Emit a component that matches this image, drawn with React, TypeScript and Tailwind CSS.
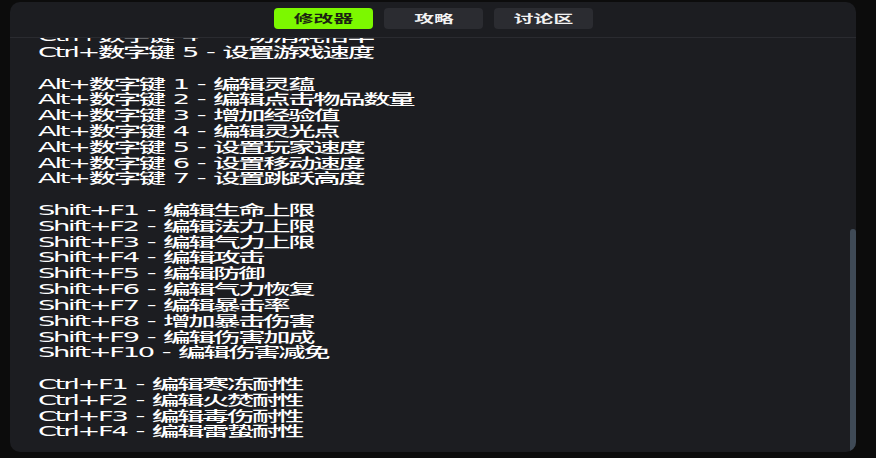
import { useEffect, useRef } from "react";

const tabs = [
  { label: "修改器", active: true },
  { label: "攻略", active: false },
  { label: "讨论区", active: false },
];

// 快捷键列表（空字符串 = 空行）
const lines: string[] = [
  "数字键 1 - 无限生命",
  "数字键 2 - 无限法力",
  "数字键 3 - 无限气力",
  "数字键 4 - 无限棍势",
  "数字键 5 - 无限专注",
  "数字键 6 - 无限葫芦",
  "数字键 7 - 无冷却时间",
  "数字键 8 - 一击必杀",
  "数字键 9 - 无视耐性",
  "数字键 0 - 物品不减",
  "",
  "小键盘 1 - 冻结敌人",
  "小键盘 2 - 超级移速",
  "小键盘 3 - 超级跳跃",
  "小键盘 4 - 无限变身",
  "小键盘 5 - 无限法宝",
  "小键盘 6 - 隐身模式",
  "",
  "Ctrl+数字键 1 - 灵蕴倍率",
  "Ctrl+数字键 2 - 经验倍率",
  "Ctrl+数字键 3 - 掉落倍率",
  "Ctrl+数字键 4 - 一切消耗倍率",
  "Ctrl+数字键 5 - 设置游戏速度",
  "",
  "Alt+数字键 1 - 编辑灵蕴",
  "Alt+数字键 2 - 编辑点击物品数量",
  "Alt+数字键 3 - 增加经验值",
  "Alt+数字键 4 - 编辑灵光点",
  "Alt+数字键 5 - 设置玩家速度",
  "Alt+数字键 6 - 设置移动速度",
  "Alt+数字键 7 - 设置跳跃高度",
  "",
  "Shift+F1 - 编辑生命上限",
  "Shift+F2 - 编辑法力上限",
  "Shift+F3 - 编辑气力上限",
  "Shift+F4 - 编辑攻击",
  "Shift+F5 - 编辑防御",
  "Shift+F6 - 编辑气力恢复",
  "Shift+F7 - 编辑暴击率",
  "Shift+F8 - 增加暴击伤害",
  "Shift+F9 - 编辑伤害加成",
  "Shift+F10 - 编辑伤害减免",
  "",
  "Ctrl+F1 - 编辑寒冻耐性",
  "Ctrl+F2 - 编辑火焚耐性",
  "Ctrl+F3 - 编辑毒伤耐性",
  "Ctrl+F4 - 编辑雷蛰耐性",
];

export default function App() {
  const listRef = useRef<HTMLDivElement>(null);

  // 滚动到底部
  useEffect(() => {
    if (listRef.current) listRef.current.scrollTop = listRef.current.scrollHeight;
  }, []);

  return (
    <div className="w-[876px] h-[458px] bg-[#0c0c0c] pt-[2px] pl-[10px] font-['DejaVu_Sans','Noto_Sans_CJK_SC',sans-serif]">
      <div className="relative w-[846px] h-[450px] rounded-[10px] bg-[#1c1d21] flex flex-col overflow-hidden">
        {/* 顶部标签 */}
        <div className="h-[36px] shrink-0 border-b border-[#2a2b30] flex justify-center items-start gap-[11px] pt-[6px] pl-[1px]">
          {tabs.map((t) => (
            <div
              key={t.label}
              className={
                t.active
                  ? "w-[99px] h-[21px] rounded-[4px] bg-[#7cf800] text-[#1a2410] flex items-center justify-center"
                  : "w-[99px] h-[21px] rounded-[4px] bg-[#2b2c31] text-[#f2f2f2] flex items-center justify-center"
              }
            >
              <span className="inline-block text-[11px] leading-none font-bold scale-x-[1.8] font-['Noto_Sans_CJK_SC',sans-serif]">
                {t.label}
              </span>
            </div>
          ))}
        </div>

        {/* 快捷键说明 */}
        <div
          ref={listRef}
          className="flex-1 overflow-y-auto overflow-x-hidden pt-[12px] pb-[12px] pl-[28px]"
        >
          <div className="w-max origin-top-left scale-x-[1.95] text-[14px] leading-[15.82px] tracking-[-1.17px] [word-spacing:1.3px] font-medium text-white whitespace-pre">
            {lines.map((l, i) => (
              <div key={i} className="h-[15.82px]">
                {l}
              </div>
            ))}
          </div>
        </div>

        {/* 滚动条 */}
        <div className="absolute right-0 bottom-0 w-[6px] h-[223px] rounded-full bg-[#3f4a56]" />
      </div>
    </div>
  );
}
